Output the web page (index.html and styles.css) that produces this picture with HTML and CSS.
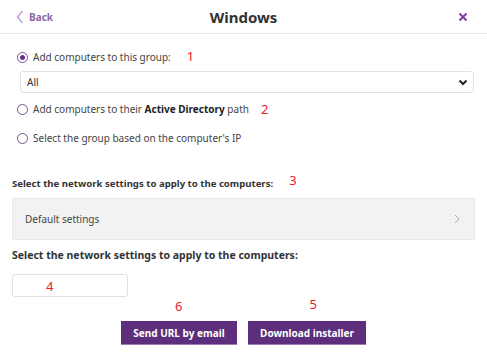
FILE: index.html
```html
<!DOCTYPE html>
<html>
<head>
<meta charset="utf-8">
<link rel="stylesheet" href="styles.css">
</head>
<body>
<div class="page">
  <header class="header">
    <a class="back"><svg class="back-icon" width="8" height="14" viewBox="0 0 8 14"><path d="M6.5 1 L1.5 7 L6.5 13" fill="none" stroke="#b89ad0" stroke-width="1.3"/></svg><span>Back</span></a>
    <h1 class="title">Windows</h1>
    <span class="close"><svg width="10" height="10" viewBox="0 0 10 10"><path d="M1.5 1.5 L8.5 8.5 M8.5 1.5 L1.5 8.5" stroke="#7d3fa6" stroke-width="2"/></svg></span>
  </header>

  <section class="options">
    <label class="radio-row">
      <span class="radio checked"></span>
      <span class="radio-text">Add computers to this group:</span>
      <span class="mark mark-1">1</span>
    </label>
    <div class="select">
      <span>All</span>
      <svg width="10" height="7" viewBox="0 0 10 7"><path d="M1.5 1.5 L5 5 L8.5 1.5" fill="none" stroke="#222" stroke-width="2"/></svg>
    </div>
    <label class="radio-row">
      <span class="radio"></span>
      <span class="radio-text">Add computers to their <b>Active Directory</b> path</span>
      <span class="mark mark-2">2</span>
    </label>
    <label class="radio-row">
      <span class="radio"></span>
      <span class="radio-text">Select the group based on the computer's IP</span>
    </label>
  </section>

  <section class="network">
    <div class="label-row">
      <span class="label">Select the network settings to apply to the computers:</span>
      <span class="mark mark-3">3</span>
    </div>
    <div class="settings-box">
      <span>Default settings</span>
      <svg width="6" height="10" viewBox="0 0 6 10"><path d="M1 1 L5 5 L1 9" fill="none" stroke="#aaa" stroke-width="1"/></svg>
    </div>
    <div class="label label-2">Select the network settings to apply to the computers:</div>
    <div class="input-box"><span class="mark mark-4">4</span></div>
  </section>

  <div class="marks-row">
    <span class="mark mark-6">6</span>
    <span class="mark mark-5">5</span>
  </div>
  <div class="buttons">
    <button class="btn btn-1">Send URL by email</button>
    <button class="btn btn-2">Download installer</button>
  </div>
</div>
</body>
</html>
```

FILE: styles.css
```css
* { box-sizing: border-box; }
html, body { margin: 0; padding: 0; background: #fff; }
body {
  font-family: "Noto Sans", "Open Sans", sans-serif;
  font-size: 10px;
  color: #333;
  width: 487px;
  height: 356px;
  overflow: hidden;
}
.header {
  height: 34px;
  display: flex;
  align-items: center;
  justify-content: space-between;
  padding: 0 16px 0 16px;
  border-bottom: 1px solid #e8e8e8;
  position: relative;
}
.back {
  display: flex;
  align-items: center;
  gap: 5px;
  color: #8c66a8;
  font-weight: 700;
  font-size: 10px;
}
.title {
  position: absolute;
  left: 0; right: 0;
  text-align: center;
  margin: 0;
  font-size: 15px;
  font-weight: 700;
  color: #333;
  pointer-events: none;
}
.close { display: flex; padding-right: 3px; }

.options { padding: 15px 13px 0 17px; }
.radio-row {
  display: flex;
  align-items: center;
  height: 16px;
}
.radio {
  width: 11px; height: 11px;
  border: 1px solid #7b4f9a;
  border-radius: 50%;
  margin-right: 5px;
  position: relative;
  flex: none;
}
.radio.checked::after {
  content: "";
  position: absolute;
  left: 2px; top: 2px;
  width: 5px; height: 5px;
  border-radius: 50%;
  background: #6a2f90;
}
.radio-text { color: #444; }
.radio-text b { color: #222; }
.mark { color: #e8202a; font-size: 13px; }
.mark-1 { margin-left: 16px; margin-top: -3px; }
.mark-2 { margin-left: 12px; }
.select {
  margin: 6px 0 8px 3px;
  height: 22px;
  border: 1px solid #e2e2e2;
  border-radius: 3px;
  display: flex;
  align-items: center;
  justify-content: space-between;
  padding: 0 5px 0 6px;
  color: #333;
}
.radio-row + .radio-row { margin-top: 13px; }

.network { padding: 0 12px; margin-top: 30px; }
.label { font-weight: 700; color: #333; font-size: 9.6px; }
.label-row { display: flex; align-items: center; height: 14px; }
.mark-3 { margin-left: 16px; margin-top: -6px; }
.settings-box {
  margin-top: 8px;
  height: 42px;
  background: #f2f2f2;
  border: 1px solid #e8e8e8;
  display: flex;
  align-items: center;
  justify-content: space-between;
  padding: 0 14px 0 12px;
  color: #444;
}
.label-2 { margin-top: 8px; font-size: 10.5px; }
.input-box {
  margin-top: 12px;
  width: 116px;
  height: 23px;
  border: 1px solid #e2e2e2;
  border-radius: 3px;
  padding-left: 33px;
  display: flex;
  align-items: center;
}
.marks-row { display: flex; height: 17px; padding-top: 0; }
.mark-6 { margin-left: 175px; margin-top: 0; }
.mark-5 { margin-left: 127px; margin-top: -2px; }
.buttons {
  display: flex;
  justify-content: center;
  gap: 11px;
  margin-top: 7px;
}
.btn {
  height: 24px;
  background: #5c2e7b;
  color: #fff;
  border: none;
  border-bottom: 1px solid #9a7cb0;
  font-family: inherit;
  font-weight: 700;
  font-size: 10px;
  padding: 0;
  white-space: nowrap;
}
.btn-1 { width: 116px; }
.btn-2 { width: 118px; }
```
